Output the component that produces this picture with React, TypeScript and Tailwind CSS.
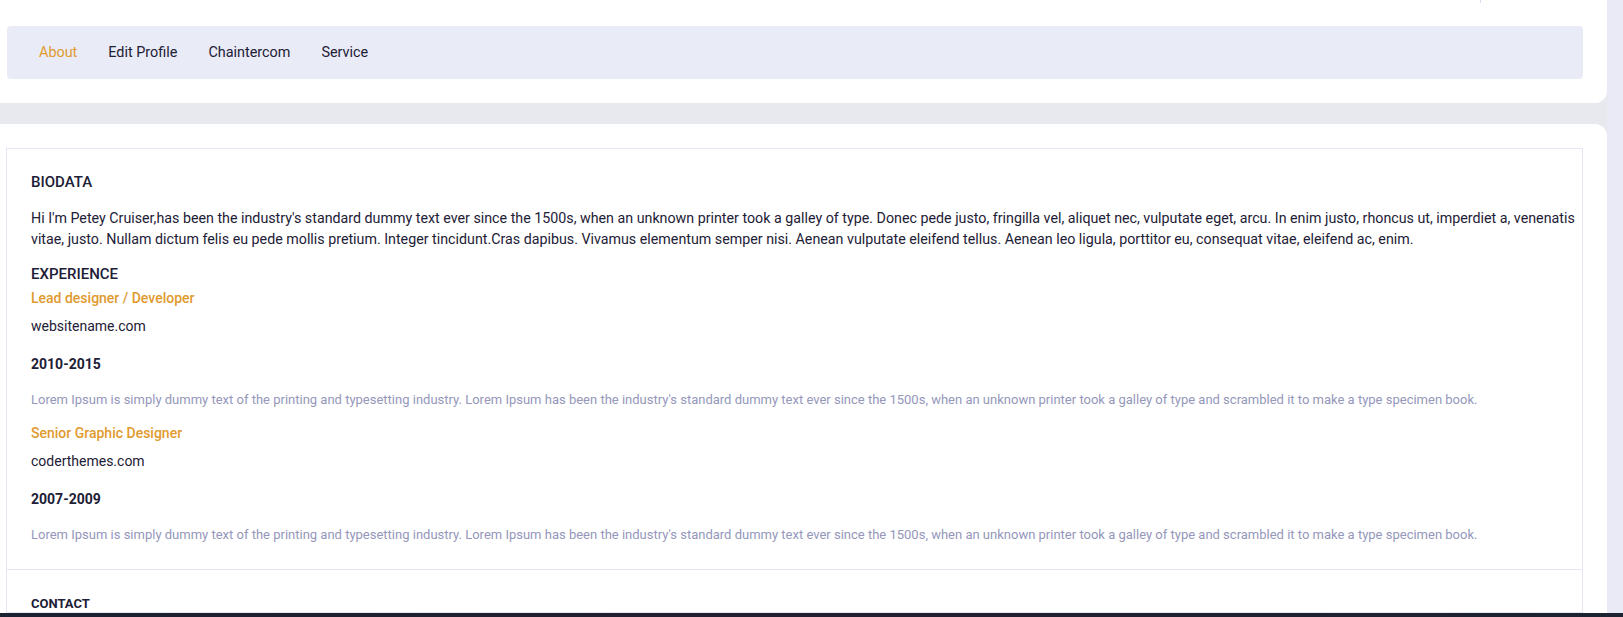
import React from "react";

const ORANGE = "text-[#e09a2e]";

function Job({ title, site, years }: { title: string; site: string; years: string }) {
  return (
    <div>
      <div className={`text-[14px] leading-[21px] font-medium ${ORANGE}`}>{title}</div>
      <div className="mt-[7px] text-[14px] leading-[21px] text-[#1d2036]">{site}</div>
      <div className="mt-[17px] text-[14px] leading-[21px] font-bold text-[#1d2036]">{years}</div>
      <div className="mt-[14px] text-[13px] leading-[21px] text-[#9597bb]">
        Lorem Ipsum is simply dummy text of the printing and typesetting industry. Lorem Ipsum has been the industry's standard dummy text ever since the 1500s, when an unknown printer took a galley of type and scrambled it to make a type specimen book.
      </div>
    </div>
  );
}

export default function App() {
  return (
    <div
      className="w-[1623px] h-[617px] overflow-hidden flex flex-col bg-[#e8e8ef]"
      style={{ fontFamily: "Roboto, 'Liberation Sans', sans-serif" }}
    >
      <div className="h-[613px] shrink-0 flex overflow-hidden">
        <div className="w-[1607px] flex flex-col">
          {/* top card */}
          <div className="h-[103px] shrink-0 bg-white rounded-br-[12px] pl-[7px] pr-[24px] flex flex-col">
            <div className="h-[3px] flex justify-end pr-[102px]">
              <div className="w-px h-[3px] bg-[#dcdcf0]" />
            </div>
            <div className="mt-[23px] h-[53px] bg-[#e9ebf6] rounded-[4px] flex items-center pl-[32px] gap-[31px] text-[14.4px] text-[#1d2036]">
              <span className={ORANGE}>About</span>
              <span>Edit Profile</span>
              <span>Chaintercom</span>
              <span>Service</span>
            </div>
          </div>
          {/* bottom card */}
          <div className="mt-[21px] flex-1 min-h-0 bg-white rounded-tr-[12px] pt-[24px] pl-[6px] pr-[24px]">
            <div className="border border-[#e6e6f5] h-full overflow-hidden">
              <div className="pl-[24px] pr-[6px] pt-[23px] pb-[24px] border-b border-[#e6e6f5]">
                <div className="text-[15px] leading-[21px] font-medium text-[#1d2036]">BIODATA</div>
                <p className="mt-[15px] text-[14.25px] leading-[21px] text-[#1d2036]">
                  Hi I'm Petey Cruiser,has been the industry's standard dummy text ever since the 1500s, when an unknown printer took a galley of type. Donec pede justo, fringilla vel, aliquet nec, vulputate eget, arcu. In enim justo, rhoncus ut, imperdiet a, venenatis vitae, justo. Nullam dictum felis eu pede mollis pretium. Integer tincidunt.Cras dapibus. Vivamus elementum semper nisi. Aenean vulputate eleifend tellus. Aenean leo ligula, porttitor eu, consequat vitae, eleifend ac, enim.
                </p>
                <div className="mt-[14px] text-[15px] leading-[21px] font-medium text-[#1d2036]">EXPERIENCE</div>
                <div className="mt-[3px]">
                  <Job title="Lead designer / Developer" site="websitename.com" years="2010-2015" />
                </div>
                <div className="mt-[13px]">
                  <Job title="Senior Graphic Designer" site="coderthemes.com" years="2007-2009" />
                </div>
              </div>
              <div className="pl-[24px] pt-[23px] text-[13px] leading-[21px] font-bold text-[#1d2036]">CONTACT</div>
            </div>
          </div>
        </div>
        <div className="flex-1 bg-[#e9eaf5]" />
      </div>
      <div className="h-[4px] shrink-0 bg-gradient-to-r from-[#1a2130] via-[#231f30] to-[#1c2331]" />
    </div>
  );
}
